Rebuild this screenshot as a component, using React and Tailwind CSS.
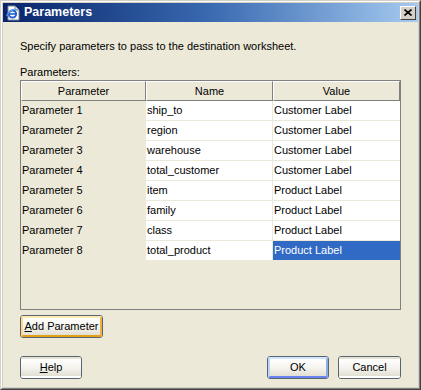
import React from "react";

const rows = [
  ["Parameter 1", "ship_to", "Customer Label"],
  ["Parameter 2", "region", "Customer Label"],
  ["Parameter 3", "warehouse", "Customer Label"],
  ["Parameter 4", "total_customer", "Customer Label"],
  ["Parameter 5", "item", "Product Label"],
  ["Parameter 6", "family", "Product Label"],
  ["Parameter 7", "class", "Product Label"],
  ["Parameter 8", "total_product", "Product Label"],
];

function XpButton({ children, width, tone }) {
  const inner =
    tone === "hot"
      ? "border-2 border-t-[#fde9b4] border-l-[#fbd88a] border-r-[#f0b03c] border-b-[#e5a01a]"
      : tone === "default"
      ? "border-2 border-t-[#cee7ff] border-l-[#bcd4f6] border-r-[#89ade4] border-b-[#6982ee]"
      : "border-2 border-transparent";
  return (
    <button className={`h-[23px] ${width} rounded-[3px] border border-[#5a6470] p-0 bg-white`}>
      <div
        className={`h-full w-full rounded-[2px] ${inner} bg-linear-to-b from-white via-[#f5f4ef] to-[#e2dfd3] flex items-center justify-center text-[11px] text-black`}
      >
        {children}
      </div>
    </button>
  );
}

function TitleIcon() {
  return (
    <svg width="16" height="16" viewBox="0 0 16 16">
      <path d="M3 1h7l4 4v10H3z" fill="#fff" stroke="#7f8a99" strokeWidth="1" />
      <path d="M10 1v4h4" fill="#dfe6ef" stroke="#7f8a99" strokeWidth="1" />
      <circle cx="7.5" cy="9" r="3.6" fill="none" stroke="#1f5fcf" strokeWidth="2" />
      <path d="M4.5 9h6" stroke="#1f5fcf" strokeWidth="1.6" />
      <path d="M1.5 11c2-5 8-8 11-6" fill="none" stroke="#5aa0f0" strokeWidth="1.2" />
    </svg>
  );
}

export default function App() {
  return (
    <div className="w-[421px] h-[390px] border border-[#d4d0c8] border-r-[#404040] border-b-[#404040] font-['Liberation_Sans',Arial,sans-serif]">
      <div className="h-full border border-white border-r-[#808080] border-b-[#808080] bg-[#d4d0c8] p-[1px] flex flex-col">
        {/* title bar */}
        <div className="h-[19px] shrink-0 flex items-center bg-linear-to-r from-[#0a246a] via-[#3a6ab0] to-[#a6caf0] pl-[2px] pr-[2px]">
          <TitleIcon />
          <span className="ml-[3px] text-white font-bold text-[12.5px] leading-none">Parameters</span>
          <div className="ml-auto w-[16px] h-[14px] bg-[#d4d0c8] border border-white border-r-[#404040] border-b-[#404040] flex items-center justify-center">
            <svg width="8" height="7" viewBox="0 0 8 7">
              <path d="M0.5 0.5l7 6M7.5 0.5l-7 6" stroke="#000" strokeWidth="1.6" />
            </svg>
          </div>
        </div>

        {/* body */}
        <div className="flex-1 bg-[#ece9d8] pl-[17px] text-[11px] text-black">
          <p className="mt-[18px] leading-[13px]">Specify parameters to pass to the destination worksheet.</p>
          <p className="mt-[13px] leading-[13px]">Parameters:</p>

          <div className="mt-[1px] w-[381px] h-[230px] border border-[#808080] bg-[#ece9d8] flex flex-col">
            <div className="flex h-[20px] shrink-0">
              <div className="w-[125px] border border-white border-r-[#808080] border-b-[#808080] flex items-center justify-center">Parameter</div>
              <div className="w-[127px] border border-white border-r-[#808080] border-b-[#808080] flex items-center justify-center">Name</div>
              <div className="w-[127px] border border-white border-r-[#808080] border-b-[#808080] flex items-center justify-center">Value</div>
            </div>
            {rows.map(([param, name, value], i) => {
              const selected = i === rows.length - 1;
              return (
                <div key={param} className="flex h-[20px] shrink-0">
                  <div className="w-[125px] pl-[1px] leading-[19px]">{param}</div>
                  <div className="w-[127px] bg-white border-r border-b border-[#ece9d8] pl-[1px] leading-[19px]">{name}</div>
                  <div
                    className={`w-[127px] border-b border-[#ece9d8] pl-[1px] leading-[19px] ${selected ? "bg-[#316ac5] text-white" : "bg-white"}`}
                  >
                    {value}
                  </div>
                </div>
              );
            })}
          </div>

          <div className="mt-[5px]">
            <XpButton width="w-[83px]" tone="hot">
              <span>
                <span className="underline">A</span>dd Parameter
              </span>
            </XpButton>
          </div>

          <div className="mt-[18px] flex items-center w-[381px]">
            <XpButton width="w-[62px]">
              <span>
                <span className="underline">H</span>elp
              </span>
            </XpButton>
            <div className="ml-auto flex gap-[9px]">
              <XpButton width="w-[62px]" tone="default">OK</XpButton>
              <XpButton width="w-[63px]">Cancel</XpButton>
            </div>
          </div>
        </div>
      </div>
    </div>
  );
}
